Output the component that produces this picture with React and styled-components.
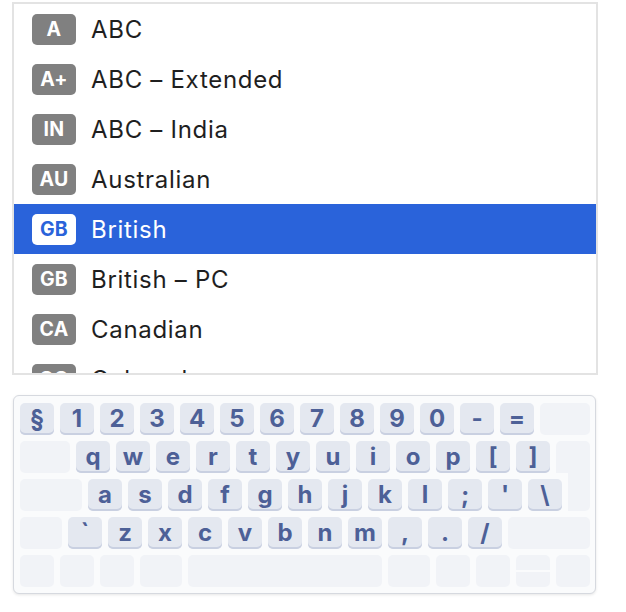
import React from "react";
import styled, { createGlobalStyle } from "styled-components";

const Global = createGlobalStyle`
  html, body { margin: 0; padding: 0; background: #ffffff; }
  body { font-family: Inter, "Noto Sans", sans-serif; }
`;

const Page = styled.div`
  width: 626px;
  height: 612px;
  padding: 2px 0 0 12px;
  box-sizing: border-box;
  display: flex;
  flex-direction: column;
`;

const List = styled.div`
  width: 586px;
  height: 373px;
  box-sizing: border-box;
  border: 2px solid #e3e3e3;
  background: #ffffff;
  overflow: hidden;
  display: flex;
  flex-direction: column;
`;

const Row = styled.div`
  flex: 0 0 50px;
  height: 50px;
  display: flex;
  align-items: center;
  padding-left: 18px;
  gap: 15px;
  background: ${(p) => (p.$selected ? "#2a63da" : "transparent")};
`;

const Badge = styled.span`
  width: 44px;
  height: 31px;
  border-radius: 5px;
  display: flex;
  align-items: center;
  justify-content: center;
  font-family: Inter, sans-serif;
  font-weight: 700;
  font-size: 19.5px;
  letter-spacing: 0.3px;
  background: ${(p) => (p.$selected ? "#ffffff" : "#808080")};
  color: ${(p) => (p.$selected ? "#2a63da" : "#ffffff")};
`;

const Label = styled.span`
  font-family: Inter, sans-serif;
  font-size: 24px;
  letter-spacing: 0.7px;
  padding-top: 1px;
  color: ${(p) => (p.$selected ? "#ffffff" : "#1f1f1f")};
`;

const Keyboard = styled.div`
  margin-top: 20px;
  margin-left: 1px;
  width: 583px;
  height: 199px;
  box-sizing: border-box;
  border: 1px solid #d6d9df;
  border-radius: 6px;
  background: #fafbfc;
  box-shadow: 0 1px 3px rgba(0, 0, 0, 0.1);
  padding: 7px 5px 6px 6px;
  display: flex;
  flex-direction: column;
  gap: 6px;
`;

const KeyRow = styled.div`
  display: flex;
  gap: 6px;
  height: 32px;
`;

const Key = styled.div`
  flex: 0 0 ${(p) => p.$w || 34}px;
  height: 32px;
  box-sizing: border-box;
  border-radius: 5px;
  background: #e4e8f0;
  box-shadow: inset 0 -2px 0 #c9d0e1;
  display: flex;
  align-items: center;
  justify-content: center;
  padding-bottom: 2px;
  font-family: Inter, sans-serif;
  font-weight: 700;
  font-size: 24px;
  color: #4d6097;
`;

const Blank = styled.div`
  flex: 0 0 ${(p) => p.$w || 34}px;
  height: 32px;
  border-radius: 5px;
  background: #f1f3f7;
`;

const ReturnKey = styled.div`
  flex: 0 0 34px;
  height: 70px;
  border-radius: 5px;
  background: #f1f3f7;
  clip-path: polygon(0 0, 100% 0, 100% 100%, 12px 100%, 12px 32px, 0 32px);
`;

const ArrowStack = styled.div`
  flex: 0 0 34px;
  height: 32px;
  display: flex;
  flex-direction: column;
  gap: 2px;
`;

const ArrowHalf = styled.div`
  flex: 1;
  background: #f1f3f7;
  border-radius: ${(p) => (p.$top ? "5px 5px 0 0" : "0 0 5px 5px")};
`;

const layouts = [
  ["A", "ABC"],
  ["A+", "ABC – Extended"],
  ["IN", "ABC – India"],
  ["AU", "Australian"],
  ["GB", "British", true],
  ["GB", "British – PC"],
  ["CA", "Canadian"],
  ["CO", "Colemak"],
];

const row1 = ["§", "1", "2", "3", "4", "5", "6", "7", "8", "9", "0", "-", "="];
const row2 = ["q", "w", "e", "r", "t", "y", "u", "i", "o", "p", "[", "]"];
const row3 = ["a", "s", "d", "f", "g", "h", "j", "k", "l", ";", "'", "\\"];
const row4 = ["`", "z", "x", "c", "v", "b", "n", "m", ",", ".", "/"];

export default function App() {
  return (
    <>
      <Global />
      <Page>
        <List>
          {layouts.map(([code, name, sel]) => (
            <Row key={name} $selected={sel}>
              <Badge $selected={sel}>{code}</Badge>
              <Label $selected={sel}>{name}</Label>
            </Row>
          ))}
        </List>
        <Keyboard>
          <KeyRow>
            {row1.map((k) => (
              <Key key={k}>{k}</Key>
            ))}
            <Blank $w={50} />
          </KeyRow>
          <KeyRow>
            <Blank $w={50} />
            {row2.map((k) => (
              <Key key={k}>{k}</Key>
            ))}
            <ReturnKey />
          </KeyRow>
          <KeyRow>
            <Blank $w={62} />
            {row3.map((k) => (
              <Key key={k}>{k}</Key>
            ))}
          </KeyRow>
          <KeyRow>
            <Blank $w={42} />
            {row4.map((k) => (
              <Key key={k}>{k}</Key>
            ))}
            <Blank $w={82} />
          </KeyRow>
          <KeyRow>
            <Blank />
            <Blank />
            <Blank />
            <Blank $w={42} />
            <Blank $w={194} />
            <Blank $w={42} />
            <Blank />
            <Blank />
            <ArrowStack>
              <ArrowHalf $top />
              <ArrowHalf />
            </ArrowStack>
            <Blank />
          </KeyRow>
        </Keyboard>
      </Page>
    </>
  );
}
